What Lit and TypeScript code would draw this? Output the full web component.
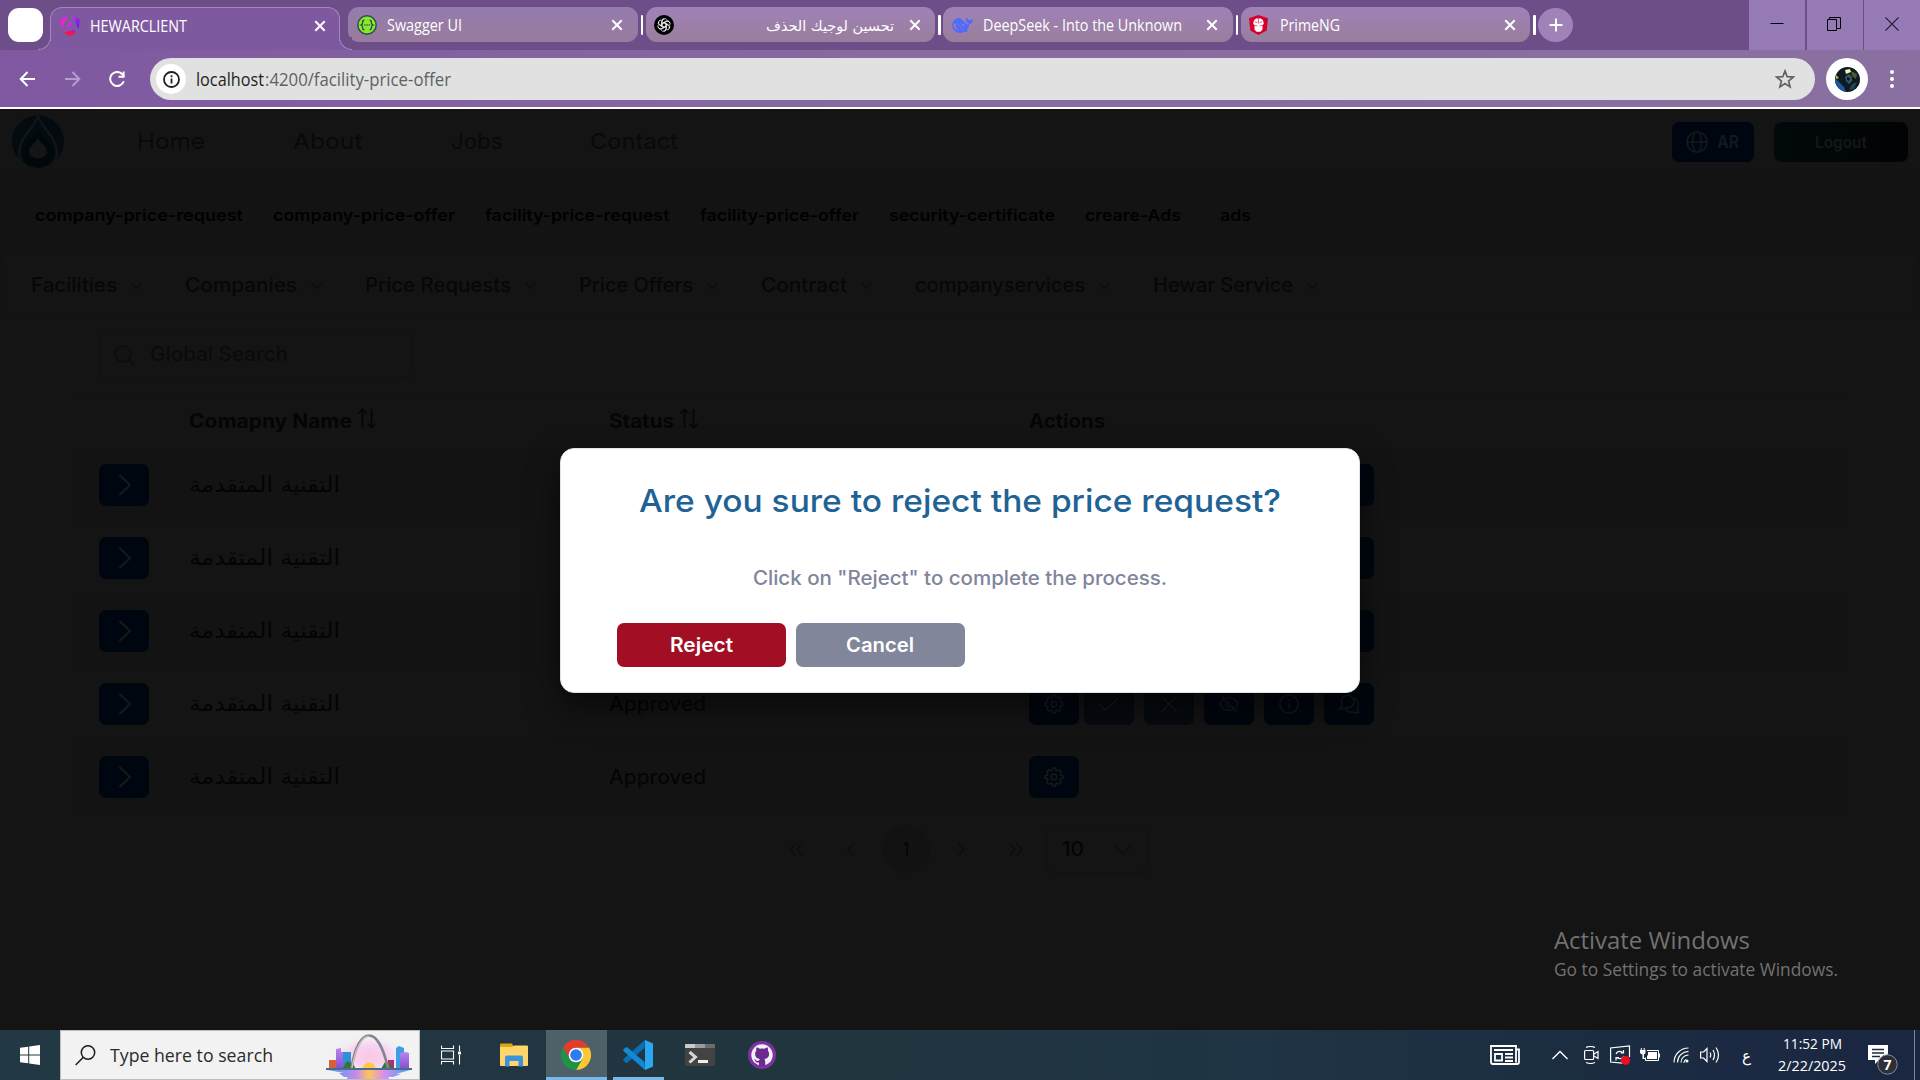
import { LitElement, html, css, svg } from "lit";
import { customElement, property } from "lit/decorators.js";

/** One line of text, stretched horizontally to an exact width. */
@customElement("fit-text")
class FitText extends LitElement {
  @property({ type: Number }) w = 0;
  static styles = css`
    :host { display: block; white-space: nowrap; line-height: 1; flex: none; }
    .t { display: inline-block; transform-origin: 0 50%; }
  `;
  render() {
    return html`<span class="t"><slot></slot></span>`;
  }
  firstUpdated() {
    const t = this.renderRoot.querySelector(".t") as HTMLElement;
    const natural = t.getBoundingClientRect().width;
    this.style.width = this.w + "px";
    if (natural) t.style.transform = `scaleX(${this.w / natural})`;
  }
}

const closeIcon = html`<svg class="close" width="12" height="12" viewBox="0 0 12 12"><path d="M1.3 1.3l9.4 9.4M10.7 1.3l-9.4 9.4" stroke="#fff" stroke-width="2" /></svg>`;

const angular = html`<svg width="20" height="20" viewBox="0 0 20 20">
  <defs><linearGradient id="ng" x1="0" y1="0" x2="1" y2=".4"><stop offset="0" stop-color="#f31bc0" /><stop offset=".55" stop-color="#d62fe0" /><stop offset="1" stop-color="#6a1bf5" /></linearGradient></defs>
  <path fill="url(#ng)" d="M12.3 0l7.3 3.2-.9 10.4zM14.4 14.3H5.6l-1 2.2h11zM7.7 0L.4 3.2l.9 10.4zM7.3 11h5.4L10 4.6z" />
  <path fill="#f5144b" d="M5.6 15.2h8.8l1 2L10 20l-5.4-2.8z" /></svg>`;

const swagger = html`<svg width="20" height="20" viewBox="0 0 20 20"><circle cx="10" cy="10" r="9.2" fill="#85ea2d" stroke="#2c4a4a" stroke-width="1.4" />
  <path d="M7.4 5.2c-1.8 0-1.8.7-1.8 2.3S5.4 9.6 4 10c1.4.4 1.600 1 1.600 2.500s0 2.300 1.800 2.300M12.600 5.200c1.800 0 1.800.7 1.800 2.300s.2 2.100 1.600 2.500c-1.400.4-1.600 1-1.600 2.500s0 2.300-1.800 2.300" fill="none" stroke="#2c4a4a" stroke-width="1.300" />
  <g fill="#2c4a4a"><circle cx="7.800" cy="10" r=".8" /><circle cx="10" cy="10" r=".8" /><circle cx="12.200" cy="10" r=".8" /></g></svg>`;

const gpt = html`<svg width="20" height="20" viewBox="0 0 20 20"><circle cx="10" cy="10" r="10" fill="#000" />
  <g fill="none" stroke="#fff" stroke-width=".8">${[0, 60, 120, 180, 240, 300].map(
    (a) => svg`<path transform="rotate(${a} 10 10)" d="M8.200 11V6.200a2.500 2.500 0 0 1 4.600-1.300M8.200 8.300l3.800-2.200a2.500 2.500 0 0 1 3.500 1" />`
  )}</g></svg>`;

const whale = html`<svg width="21" height="20" viewBox="0 0 21 20"><path fill="#4d6bfe" d="M20.800 4c-.3-.1-.5.2-.8.400-.7.700-1.500.900-2.500.700-1.200-.100-2-.8-2.400-1.900-.2-.4-.6-.700-1-.400-.5.600-.5 1.900 0 3.300.5 1.300 1.400 2 2.400 2.800-.4.700-1.400.5-2.300-.2C12.600 7.400 11 5.400 9.200 4.300c-.5-.3-.400-.600.100-.800C5 2.200.3 5 .2 10c-.1 5 4.300 8.300 8.700 7.900 1.400-.100 2.800-.6 4-1.400.5.300 2 .7 2.700.300.4-.2.200-.6-.200-.700-.6-.100-.9-.400-.900-.600 1.700-1.900 2.600-3.900 2.900-6.400 1.500-.3 2.600-1.200 3.100-2.700.3-.8.600-2.100.300-2.400zM10.900 15c-1.800-1.300-2.700-3.700-4.500-5-1.200-.9-2.500-1.100-2.800-.400-.4 2 1 4.800 3.800 5.800-3.800-.2-6-3-5.800-5.700C1.700 8.100 4.300 8 6.800 9.700c2 1.400 2.700 3.700 4.800 4.800z" /><circle cx="11.300" cy="9.800" r="1.100" fill="#a083b5" /></svg>`;

const prime = html`<svg width="19" height="20" viewBox="0 0 19 20"><path fill="#d5002c" d="M9.500 0L19 3.200l-1.300 12.300L9.500 20l-8.200-4.500L0 3.200z" />
  <path fill="#fff" d="M5 5.200l2.200-1.600h4.600L14 5.200l.8 3.600-1.300 1.700v4l-2 2.300h-4l-2-2.300v-4L4.200 8.800z" />
  <path stroke="#d5002c" stroke-width=".6" fill="none" d="M9.500 3.500v5M5.800 6.700l2.700 1M13.200 6.700l-2.700 1M5 10.300l3.500.6M14 10.300l-3.500.6" /></svg>`;

const tabs = [
  { icon: swagger, text: "Swagger UI", w: 75, gap: 10, arabic: false },
  { icon: gpt, text: "تحسين لوجيك الحذف", w: 128, gap: 92, arabic: true },
  { icon: whale, text: "DeepSeek - Into the Unknown", w: 199, gap: 10, arabic: false },
  { icon: prime, text: "PrimeNG", w: 60, gap: 11.5, arabic: false },
];

@customElement("browser-chrome")
class BrowserChrome extends LitElement {
  static styles = css`
    :host { display: block; font-family: "Open Sans", "Noto Sans", "DejaVu Sans", sans-serif; color: #fff; border-bottom: 2px solid #fff; }
    svg { display: block; flex: none; }
    .strip { height: 50px; display: flex; background: #6d4e89; box-sizing: border-box; padding-left: 8px; }
    .mini { width: 35px; height: 34px; background: #fff; border-radius: 11px; margin-top: 8px; margin-right: 7px; flex: none; position: relative; z-index: 1; }
    .active { position: relative; width: 290px; height: 43px; margin-top: 7px; box-sizing: border-box; border: 1px solid #a487bd; border-bottom: 0; border-radius: 12px 12px 0 0; background: #7f59a0; display: flex; align-items: center; padding: 0 13px 7px 9px; margin-right: 8px; }
    .active::before, .active::after { content: ""; position: absolute; bottom: 0; width: 13px; height: 13px; box-sizing: border-box; border: 1px solid #a487bd; border-top: 0; }
    .active::before { left: -13px; border-left: 0; border-bottom-right-radius: 13px; background: #6d4e89; box-shadow: 5px 5px 0 1px #7f59a0; clip-path: inset(0); }
    .active::after { right: -13px; border-right: 0; border-bottom-left-radius: 13px; background: #6d4e89; box-shadow: -5px 5px 0 1px #7f59a0; clip-path: inset(0); }
    .tab { width: 289.500px; height: 35px; margin-top: 7px; border-radius: 11px; box-sizing: border-box; background: linear-gradient(#9f82b7, #9a7e9c); display: flex; align-items: center; padding: 0 14.500px 0 8.500px; flex: none; }
    .tab.first { background: linear-gradient(#957cae, #987b9d); }
    .sep { width: 2.500px; height: 20px; background: #fff; border-radius: 1px; margin: 15px 2.500px 0 3px; flex: none; }
    .close { margin-left: auto; }
    .label { font-size: 15.500px; display: flex; padding-top: 2px; }
    .arabic { font-family: "DejaVu Sans", sans-serif; font-size: 14px; }
    .plus { width: 35px; height: 34px; border-radius: 50%; background: #9e82b8; margin: 8px 0 0 0; display: flex; align-items: center; justify-content: center; }
    .win { margin-left: auto; display: flex; gap: 1.500px; }
    .win div { width: 56px; height: 50px; background: #957ab5; display: flex; align-items: center; justify-content: center; padding: 0 1px 2px 0; box-sizing: border-box; }
    .bar { height: 57px; display: flex; align-items: center; background: linear-gradient(90deg, #7f58a1, #876aa0 45%, #8a70a1); box-sizing: border-box; padding: 1px 0 0 19px; }
    .nav { display: flex; gap: 28px; padding-right: 24px; align-items: center; }
    .omni { width: 1665px; height: 42px; border-radius: 21px; background: #e1e1e1; display: flex; align-items: center; box-sizing: border-box; padding: 0 20px 0 6px; }
    .info { width: 30px; height: 30px; border-radius: 50%; background: #fff; display: flex; align-items: center; justify-content: center; margin-right: 10px; }
    .url { font-size: 18.500px; color: #1f1f1f; display: flex; gap: 1px; padding-top: 1px; }
    .path { color: #5f6163; }
    .star { margin-left: auto; }
    .avatar { width: 42px; height: 42px; border-radius: 50%; background: #fff; margin: 0 22px 0 11px; display: flex; align-items: center; justify-content: center; }
  `;
  render() {
    return html`
      <div class="strip">
        <div class="mini"></div>
        <div class="active">${angular}<div class="label" style="margin-left:10px"><fit-text w="97">HEWARCLIENT</fit-text></div>${closeIcon}</div>
        ${tabs.map(
          (t, i) => html`
            <div class="tab ${i === 0 ? "first" : ""}">${t.icon}
              <div class="label" style="margin-left:${t.gap}px"><fit-text class=${t.arabic ? "arabic" : ""} w=${t.w}>${t.text}</fit-text></div>
              ${closeIcon}
            </div>
            <div class="sep"></div>`
        )}
        <div class="plus"><svg width="14" height="14" viewBox="0 0 14 14"><path d="M7 .5v13M.5 7h13" stroke="#fff" stroke-width="2" /></svg></div>
        <div class="win">
          <div><svg width="14" height="14" viewBox="0 0 14 14"><path d="M.5 6.500h13" stroke="#000" /></svg></div>
          <div><svg width="14" height="14" viewBox="0 0 14 14"><path d="M.5 2.500h9v11h-9zM2.500 2.500v-2h11v11h-4" fill="none" stroke="#000" /></svg></div>
          <div><svg width="14" height="14" viewBox="0 0 14 14"><path d="M.5.5l13 13M13.500.5l-13 13" stroke="#2c1f3a" stroke-width="1.100" /></svg></div>
        </div>
      </div>
      <div class="bar">
        <div class="nav">
          <svg width="17" height="16" viewBox="0 0 17 16"><path d="M16 8H2M8.500 1L1.700 8l6.800 7" fill="none" stroke="#fff" stroke-width="2" /></svg>
          <svg width="17" height="16" viewBox="0 0 17 16"><path d="M1 8h14M8.500 1l6.800 7-6.800 7" fill="none" stroke="#b49bc9" stroke-width="2" /></svg>
          <svg width="17" height="16" viewBox="0 0 17 16"><path d="M14.800 10.200A7 7 0 1 1 13.600 3.500l1 1.500" fill="none" stroke="#fff" stroke-width="2" /><path d="M15.600.4v6.300H9.500V4.800h4.200V.4z" fill="#fff" /></svg>
        </div>
        <div class="omni">
          <div class="info"><svg width="17" height="17" viewBox="0 0 17 17"><circle cx="8.500" cy="8.500" r="7.500" fill="none" stroke="#1f1f1f" stroke-width="1.800" /><path d="M8.500 7.500v5M8.500 4.300v1.900" stroke="#1f1f1f" stroke-width="1.800" /></svg></div>
          <div class="url"><fit-text w="68">localhost</fit-text><fit-text class="path" w="186">:4200/facility-price-offer</fit-text></div>
          <svg class="star" width="20" height="20" viewBox="0 0 20 20"><path d="M10 2l2.200 5.700 6 .400-4.600 3.900 1.500 5.900L10 14.600l-5.100 3.300L6.400 12 1.800 8.100l6-.4z" fill="none" stroke="#5f6163" stroke-width="1.700" /></svg>
        </div>
        <div class="avatar"><svg width="25" height="25" viewBox="0 0 25 25"><defs><clipPath id="av"><circle cx="12.500" cy="12.500" r="12.500" /></clipPath></defs><g clip-path="url(#av)"><rect width="25" height="25" fill="#0d1a20" /><path d="M0 11l9 9 2 5H0z" fill="#2255a0" /><path d="M1 8l3 3-3 1z" fill="#c9b33a" /><path d="M10 3l5-1 1 3-5 2z" fill="#f3f0c2" /><path d="M16 4l6 3-1 5-4-3z" fill="#4a5b30" /><path d="M10 10l4-3 3 3v4l-3 3-3-3z" fill="#35596a" /><path d="M12 10l3 1-1 3-2-1z" fill="#0a1118" /><path d="M17 17l5-2-3 7-5 1z" fill="#234552" /></g></svg></div>
        <svg width="4" height="20" viewBox="0 0 4 20"><g fill="#fff"><circle cx="2" cy="3" r="2" /><circle cx="2" cy="10" r="2" /><circle cx="2" cy="17" r="2" /></g></svg>
      </div>`;
  }
}

const menu: [string, number][] = [
  ["Facilities", 86], ["Companies", 112], ["Price Requests", 146], ["Price Offers", 114],
  ["Contract", 86], ["companyservices", 170], ["Hewar Service", 140],
];
const links: [string, number][] = [
  ["company-price-request", 208], ["company-price-offer", 182], ["facility-price-request", 184.5],
  ["facility-price-offer", 159], ["security-certificate", 166], ["creare-Ads", 96], ["ads", 31],
];
const heads: [string, number][] = [["Home", 68], ["About", 69.5], ["Jobs", 51.5], ["Contact", 88]];
const rows = [
  { status: "", actions: 6 }, { status: "", actions: 6 }, { status: "", actions: 6 },
  { status: "Approved", actions: 6 }, { status: "Approved", actions: 1 },
];

const ink = "#16191c";
const cog = svg`<g stroke-linejoin="round"><path d="M8.700 1h2.600l.5 2.300 1.500.6 2-1.200 2 2-1.200 2 .6 1.500 2.300.5v2.600l-2.300.5-.6 1.500 1.200 2-2 2-2-1.200-1.500.6-.5 2.300H8.700l-.5-2.300-1.500-.6-2 1.200-2-2 1.200-2-.6-1.500L1 11.300V8.700l2.300-.5.6-1.500-1.200-2 2-2 2 1.200 1.500-.6z" /><circle cx="10" cy="10" r="2.700" /></g>`;
const actionIcons = [
  cog,
  svg`<path d="M.5 10.500l6 5.500L19.500 4" />`,
  svg`<path d="M2.500 2.500l15 15M17.500 2.500l-15 15" />`,
  svg`<path d="M4.500 5C3 6 1.500 8 .8 10c1.800 4.300 5 6.200 9.200 6.200 1.600 0 3-.3 4.200-.8M7.500 4.100C12.500 3 17 5.300 19.200 10c-.6 1.400-1.500 2.700-2.600 3.700M7.300 8.500a3.200 3.200 0 0 0 4.300 4.300M3 2.500l14.500 15" />`,
  svg`<circle cx="10" cy="10" r="9.200" /><path d="M10 9v5.500M10 5.300v1.800" />`,
  svg`<path d="M3 10.500A6.300 6.300 0 1 1 7.500 13.800L1 15zM15 4a7 7 0 0 1 3.300 9.500l1.200 5.500-5.500-1A7 7 0 0 1 6.800 15.500" />`,
];
const sortIcon = html`<svg width="20" height="21" viewBox="0 0 20 21"><path d="M5.500 20V1.500M1.500 5.500l4-4 4 4M14.500 1v18.500M10.500 15.500l4 4 4-4" fill="none" stroke="#040506" stroke-width="1.600" /></svg>`;

@customElement("offer-page")
class OfferPage extends LitElement {
  static styles = css`
    :host { display: block; position: relative; height: 921px; background: #141414; font-family: Inter, "DejaVu Sans", sans-serif; color: #090b0e; overflow: hidden; }
    svg { display: block; flex: none; }
    .head { height: 64px; box-sizing: border-box; border-bottom: 1px solid #121212; display: flex; align-items: center; padding: 2px 12px 0 12px; }
    .nav { display: flex; gap: 88px; margin-left: 73px; font-size: 22px; padding-bottom: 1px; color: #08090b; }
    .btn { height: 40px; border-radius: 7px; display: flex; align-items: center; justify-content: center; color: #14181a; font-weight: 700; }
    .lang { width: 82px; background: #00060f; margin-left: auto; gap: 9px; font-size: 17px; padding-right: 2px; padding-top: 1px; box-sizing: border-box; }
    .out { width: 134px; margin-left: 20px; background: linear-gradient(90deg, #02090b, #010304); font-size: 15.500px; font-weight: 600; padding-top: 2px; box-sizing: border-box; }
    .links { height: 81px; box-sizing: border-box; display: flex; gap: 30px; align-items: center; padding: 4px 0 0 35px; font-size: 16.500px; font-weight: 600; color: #010101; background: #131313; }
    .links fit-text:last-child { margin-left: 9px; }
    .menu { height: 62px; box-sizing: border-box; border: 1px solid #121212; border-radius: 6px; display: flex; align-items: center; gap: 43.500px; padding: 1px 0 0 30px; font-size: 19.500px; font-weight: 500; color: #050709; }
    .item { display: flex; align-items: center; gap: 13.500px; }
    .search { margin: 16px 0 0 99px; width: 313px; height: 46px; box-sizing: border-box; border: 1px solid #111112; border-radius: 7px; display: flex; align-items: center; gap: 15px; padding-left: 14px; font-size: 19.500px; font-weight: 500; color: #090b0d; }
    .table { margin: 15px 79px 0; border-top: 1px solid #121212; font-size: 19.500px; }
    .row { height: 73px; box-sizing: border-box; border-bottom: 1px solid #121212; display: grid; grid-template-columns: 110px 420px 420px 1fr; align-items: center; }
    .row.th { height: 55px; font-weight: 700; color: #040506; padding-top: 1px; }
    .row.th div { display: flex; gap: 5px; align-items: center; }
    .row.th svg { position: relative; top: -3px; }
    .row:nth-child(even) { background: #131313; }
    .sq { width: 50px; height: 42px; border-radius: 7px; background: #00060f; display: flex; align-items: center; justify-content: center; }
    .first { padding-left: 20px; }
    .name { display: flex; font-family: "DejaVu Sans", sans-serif; font-size: 22px; color: #030405; }
    .status { color: #040506; font-weight: 500; padding-top: 2px; }
    .acts { display: flex; gap: 10px; }
    .acts .sq:nth-child(2) { margin-left: -5px; }
    .acts .off { background: #060a0f; }
    .pager { height: 68px; display: flex; align-items: center; justify-content: center; padding: 1px 0 0 0; font-size: 18px; font-weight: 500; }
    .pg { width: 48px; height: 48px; border-radius: 50%; display: flex; align-items: center; justify-content: center; margin-right: 7px; }
    .pg.on { background: #121212; color: #020508; padding-top: 1px; box-sizing: border-box; }
    .size { width: 103px; height: 47px; box-sizing: border-box; border: 1px solid #111111; border-radius: 7px; display: flex; align-items: center; justify-content: space-between; padding: 2px 16px 0 15px; font-size: 19.500px; color: #030404; margin-left: -1px; }
    .overlay { position: absolute; inset: 0; display: flex; align-items: center; justify-content: center; padding-top: 2px; }
    .modal { width: 800px; height: 245px; box-sizing: border-box; background: #fff; border: 1px solid #dbe4ec; border-radius: 14px; box-shadow: 0 16px 32px rgba(0, 0, 0, 0.55); padding: 36px 56px 0; display: flex; flex-direction: column; align-items: center; }
    .title { font-size: 31.500px; font-weight: 500; color: #1f6396; }
    .sub { font-size: 19.500px; font-weight: 500; color: #80859b; margin-top: 52px; }
    .row2 { display: flex; gap: 10px; align-self: stretch; margin-top: 35px; font-size: 19.500px; font-weight: 600; color: #fff; }
    .mb { width: 169px; height: 44px; border-radius: 7px; display: flex; align-items: center; justify-content: center; background: #a20f25; padding-top: 1px; box-sizing: border-box; }
    .mb.grey { background: #81869b; padding-right: 1px; }
    .mark { position: absolute; left: 1554px; top: 819px; display: flex; flex-direction: column; gap: 8px; color: #727272; font-family: "Open Sans", "Noto Sans", sans-serif; font-size: 18.500px; }
    .mark .big { font-size: 24px; }
  `;
  btn(icon: unknown, off = false) {
    return html`<div class="sq ${off ? "off" : ""}"><svg width="20" height="20" viewBox="0 0 20 20" fill="none" stroke=${ink} stroke-width="1.500">${icon}</svg></div>`;
  }
  row(status: string, count: number) {
    return html`<div class="row">
      <div class="first"><div class="sq"><svg width="14" height="22" viewBox="0 0 14 22"><path d="M3 1.500L13 11 3 20.500" fill="none" stroke="#16181a" stroke-width="2.200" stroke-linecap="round" stroke-linejoin="round" /></svg></div></div>
      <div class="name"><fit-text w="151">التقنية المتقدمة</fit-text></div>
      <div class="status">${status ? html`<fit-text w="97">${status}</fit-text>` : ""}</div>
      <div class="acts">${actionIcons.slice(0, count).map((ic, i) => this.btn(ic, i === 1 || i === 2))}</div>
    </div>`;
  }
  arrow(d: string) {
    return html`<div class="pg"><svg width="16" height="13" viewBox="0 0 16 13"><path d=${d} fill="none" stroke="#0c0d0f" stroke-width="1.400" /></svg></div>`;
  }
  render() {
    return html`
      <div class="head">
        <svg width="52" height="53" viewBox="0 0 52 53"><circle cx="26" cy="26.500" r="26" fill="#040b10" />
          <path d="M26 1C22 14 7 22 7 38c0 6 4 11 8 14M26 1c4 13 19 21 19 37 0 6-4 11-8 14" fill="none" stroke="#131516" stroke-width="2.400" />
          <path d="M26 14c-4 9-15 14-15 24a15 15 0 0 0 30 0c0-10-11-15-15-24z" fill="#01080c" />
          <path d="M26 23c-2 5-9 8-9 14a9 6.500 0 0 0 18 0c0-6-7-9-9-14z" fill="#141516" />
        </svg>
        <div class="nav">${heads.map(([t, w]) => html`<fit-text w=${w}>${t}</fit-text>`)}</div>
        <div class="btn lang"><svg width="22" height="22" viewBox="0 0 22 22" fill="none" stroke="#14181a" stroke-width="1.600"><circle cx="11" cy="11" r="10" /><ellipse cx="11" cy="11" rx="4.500" ry="10" /><path d="M1 11h20" /></svg><fit-text w="22">AR</fit-text></div>
        <div class="btn out"><fit-text w="52">Logout</fit-text></div>
      </div>
      <div class="links">${links.map(([t, w]) => html`<fit-text w=${w}>${t}</fit-text>`)}</div>
      <div class="menu">${menu.map(([t, w]) => html`<div class="item"><fit-text w=${w}>${t}</fit-text><svg width="11" height="8" viewBox="0 0 11 8"><path d="M.8 1l4.700 5.500L10.200 1" fill="none" stroke="#0b0d0f" stroke-width="1.400" /></svg></div>`)}</div>
      <div class="search"><svg width="21" height="21" viewBox="0 0 21 21"><path d="M14.500 14.500L20 20" stroke="#0b0d0f" stroke-width="1.700" /><circle cx="9" cy="9" r="8" fill="none" stroke="#0b0d0f" stroke-width="1.600" /></svg><fit-text w="138">Global Search</fit-text></div>
      <div class="table">
        <div class="row th"><div></div><div><fit-text w="163">Comapny Name</fit-text>${sortIcon}</div><div><fit-text w="65">Status</fit-text>${sortIcon}</div><div><fit-text w="76">Actions</fit-text></div></div>
        ${rows.map((r) => this.row(r.status, r.actions))}
      </div>
      <div class="pager">
        ${this.arrow("M7.500.5l-5.500 6 5.500 6M14.500.5l-5.500 6 5.500 6")}${this.arrow("M10.500.5l-5.500 6 5.500 6")}
        <div class="pg on"><fit-text w="6">1</fit-text></div>
        ${this.arrow("M5.500.5l5.500 6-5.500 6")}${this.arrow("M1.500.5l5.500 6-5.500 6M8.500.5l5.500 6-5.500 6")}
        <div class="size"><fit-text w="22">10</fit-text><svg width="18" height="10" viewBox="0 0 18 10"><path d="M1 1l8 8 8-8" fill="none" stroke="#0c0d0f" stroke-width="1.500" /></svg></div>
      </div>
      <div class="mark"><fit-text class="big" w="196">Activate Windows</fit-text><fit-text w="284">Go to Settings to activate Windows.</fit-text></div>
      <div class="overlay"><div class="modal">
        <div class="title"><fit-text w="642">Are you sure to reject the price request?</fit-text></div>
        <div class="sub"><fit-text w="414">Click on "Reject" to complete the process.</fit-text></div>
        <div class="row2"><div class="mb"><fit-text w="63">Reject</fit-text></div><div class="mb grey"><fit-text w="68">Cancel</fit-text></div></div>
      </div></div>`;
  }
}

@customElement("task-bar")
class TaskBar extends LitElement {
  static styles = css`
    :host { display: flex; height: 50px; background: linear-gradient(90deg, #223842, #21353f 45%, #1f3444 65%, #1c2e42 80%, #1a2642); color: #fff; font-family: "Open Sans", "Noto Sans", sans-serif; }
    svg { display: block; flex: none; }
    .cell { display: flex; align-items: center; justify-content: center; box-sizing: border-box; height: 50px; flex: none; }
    .start { width: 60px; }
    .search { width: 360px; height: 50px; box-sizing: border-box; background: #f2f2f2; border: 1px solid #bdbdbd; display: flex; align-items: center; padding: 0 7px 0 14px; color: #2b2b2b; font-size: 18.500px; }
    .search fit-text { margin-left: 14px; }
    .arch { margin-left: auto; align-self: flex-end; }
    .app { width: 61px; }
    .app.files { padding-left: 5px; }
    .app.on { background: #4e6168; border-bottom: 3px solid #76b9ed; padding: 3px 1px 0 0; margin-left: 4px; }
    .app.run { width: 51px; margin: 0 5.500px 0 6px; border-bottom: 3px solid #76b9ed; padding: 3px 1px 0 0; }
    .app.git { padding-left: 1px; }
    .tray { margin-left: auto; display: flex; align-items: center; }
    .caret { margin-left: 32px; }
    .cam { margin-left: 16px; }
    .sync { margin-left: 11px; }
    .bat { margin-left: 9px; }
    .wifi { margin-left: 13px; }
    .vol { margin-left: 11px; }
    .clock { width: 68px; margin: 0 22px 0 27px; display: flex; flex-direction: column; align-items: center; gap: 8px; font-size: 14.500px; }
    .ar { font-family: "DejaVu Sans", sans-serif; font-size: 16px; margin-left: 22px; padding-top: 1px; }
    .note { margin-top: 9px; }
    .edge { width: 1px; height: 50px; background: #7d8595; margin-left: 16px; margin-right: 5px; }
  `;
  render() {
    return html`
      <div class="cell start"><svg width="20" height="20" viewBox="0 0 20 20" fill="#fff"><path d="M0 2.800l8.200-1.100v7.800H0zM9.200 1.500L20 0v9.500H9.200zM0 10.500h8.200v7.800L0 17.200zM9.200 10.500H20V20L9.200 18.500z" /></svg></div>
      <div class="search">
        <svg width="21" height="21" viewBox="0 0 21 21"><circle cx="13" cy="7.500" r="6.700" fill="none" stroke="#1b1b1b" stroke-width="1.500" /><path d="M8.300 12.300L.7 20" stroke="#1b1b1b" stroke-width="1.500" /></svg>
        <fit-text w="163">Type here to search</fit-text>
        <svg class="arch" width="86" height="47" viewBox="0 0 86 47">
          <defs>
            <radialGradient id="glow"><stop offset="0" stop-color="#fcc6e2" /><stop offset=".5" stop-color="#f6d4f2" /><stop offset="1" stop-color="#f2f2f2" stop-opacity="0" /></radialGradient>
            <linearGradient id="wat"><stop offset="0" stop-color="#3f9df5" /><stop offset=".35" stop-color="#c78be8" /><stop offset=".5" stop-color="#ffc45a" /><stop offset=".68" stop-color="#d88ff0" /><stop offset="1" stop-color="#3f9df5" /></linearGradient>
            <linearGradient id="tw" x2="0" y2="1"><stop offset="0" stop-color="#b886f0" /><stop offset="1" stop-color="#8a4fd0" /></linearGradient>
          </defs>
          <ellipse cx="43" cy="24" rx="40" ry="22" fill="url(#glow)" />
          <path d="M3 28h9v8H3z" fill="#d9603c" /><path d="M10 17l5-1v20h-5zM14 20h3v16h-3z" fill="url(#tw)" /><path d="M17 20h8v16h-8z" fill="#2f8fd8" />
          <path d="M70 16l3-2 5 2v20h-8z" fill="#3f9de6" /><path d="M74 21l6-1 3 1v15h-9z" fill="url(#tw)" /><path d="M62 28h6v8h-6z" fill="#a8326e" />
          <path d="M16 37l5-8 6 3 3 5zM55 37l4-7 5 3 4 4z" fill="#38743a" />
          <circle cx="43" cy="37" r="6.500" fill="#ffc83d" />
          <path d="M25.500 36C29 14 36 3.500 43 3.500S57 14 62 36" fill="none" stroke="#85858f" stroke-width="2.600" /><path d="M26 36C29.500 15 36.500 4 43 4" fill="none" stroke="#cfc3b8" stroke-width="1.200" />
          <path d="M2 38h82l-14 4h5l-8 3h-5l2 3H20l2-3h-4l-5-4h5z" fill="url(#wat)" />
          <path d="M0 36h86v2H0z" fill="#4a6e8a" />
        </svg>
      </div>
      <div class="cell app"><svg width="20" height="20" viewBox="0 0 20 20" fill="none" stroke="#fff"><path d="M.5.500v3h12v-3M.5 19.500v-3h12v3M.5 6h12v8H.5zM18.500.5V6M18.500 10v9.500" stroke-width="1.100" /><path d="M17 6.500h3v3h-3z" fill="#fff" stroke="none" /></svg></div>
      <div class="cell app files"><svg width="28" height="24" viewBox="0 0 28 24"><path d="M0 1.500Q0 .5 1 .5h11l1.500 3H28V22H0z" fill="#e0a50e" /><path d="M0 4h12l2-1.500h13q1 0 1 1V22q0 1-1 1H1q-1 0-1-1z" fill="#ffd667" /><path d="M5 23.500v-9q0-2 2-2h14q2 0 2 2v9h-4.500V18h-9v5.500z" fill="#3c93dd" /></svg></div>
      <div class="cell app on"><svg width="30" height="30" viewBox="0 0 30 30"><path d="M28 7.500A15 15 0 0 1 15 30l6.500-11.200L15 7.500z" fill="#fcc934" /><path d="M2 7.500l6.500 11.200L15 15V7.500h13A15 15 0 0 0 2 7.500z" fill="#e33b2e" /><path d="M2 7.500A15 15 0 0 0 15 30l6.500-11.200-6 3-7-3z" fill="#1e9447" /><circle cx="15" cy="15" r="7.300" fill="#fff" /><circle cx="15" cy="15" r="5.800" fill="#2d7bf0" /></svg></div>
      <div class="cell app run"><svg width="30" height="30" viewBox="0 0 30 30"><path d="M22 0l-.5 8L4.500 22.500q-1 .5-2 0l-1.800-1.700q-1-1 0-2z" fill="#0b6fb8" /><path d="M22 30l-.5-8L4.500 7.500q-1-.5-2 0L.7 9.200q-1 1 0 2z" fill="#1289d6" /><path d="M22 0l8 3.500v23L22 30z" fill="#2aa7f2" /></svg></div>
      <div class="cell app"><svg width="30" height="22" viewBox="0 0 30 22"><rect width="30" height="22" rx="1" fill="#434344" /><path d="M0 1q0-1 1-1h9v4H0z" fill="#ccc9cc" /><path d="M10 0h10v4H10z" fill="#9b999c" /><path d="M20 0h9q1 0 1 1v3H20z" fill="#6f6c70" /><path d="M4.500 8l6 5-6 5.500" fill="none" stroke="#d5d5d5" stroke-width="3" /><path d="M13 16h10v3H13z" fill="#eee" /></svg></div>
      <div class="cell app git"><svg width="28" height="28" viewBox="0 0 28 28"><circle cx="14" cy="14" r="14" fill="#7c33a0" /><circle cx="14" cy="14" r="10.700" fill="#f4eef7" /><path d="M11 25v-3.500c-2.500.5-3.500-.8-4-2l-1-1.200c1.500-.3 2 1.500 3.200 1.700.8.100 1.500-.1 1.900-.4.1-.8.400-1.200.8-1.600-3-.4-4.800-2-4.800-5.100 0-1.300.4-2.300 1.200-3.100-.2-1-.2-2.200.3-3.300 1.200 0 2.200.6 3.100 1.300a12 12 0 0 1 4.800 0c.9-.7 1.900-1.300 3.100-1.300.4 1.100.5 2.300.3 3.300.8.800 1.200 1.800 1.200 3.100 0 3.100-1.800 4.700-4.800 5.100.6.500.9 1.300.9 2.500V25z" fill="#6b2b8e" /></svg></div>
      <div class="tray">
        <svg width="30" height="20" viewBox="0 0 30 20" fill="none" stroke="#fff" stroke-width="1.800"><path d="M26 17.500V1H1v16q0 2 2 2h24q2 0 2-2V4.500h-3" /><path d="M4 5h19M15 9h8M15 12.500h8M15 16h8" /><path d="M5 9h7v6.500H5z" /></svg>
        <svg class="caret" width="16" height="10" viewBox="0 0 16 10"><path d="M.5 9L8 1.500 15.500 9" fill="none" stroke="#fff" stroke-width="1.400" /></svg>
        <svg class="cam" width="15" height="18" viewBox="0 0 15 18" fill="none" stroke="#fff" stroke-width="1.200"><rect x=".6" y="4.500" width="9" height="9" rx="1" /><path d="M10 8l4-2.500v7L10 10M2 1.500Q6.500-.5 11 1.500M2 16.500q4.500 2 9 0" /></svg>
        <svg class="sync" width="21" height="20" viewBox="0 0 21 20" fill="none" stroke="#fff" stroke-width="1.200"><path d="M19.500 12V1L.6 3v14l12 1.200" /><path d="M6 9q1.500-3.500 5-2.500l2.500 1.500M13.500 5v3h-3M14 11q-1.500 3.500-5 2.500L6 12.500M6 15.500v-3h3" /><circle cx="15.500" cy="15.300" r="4.600" fill="#e81123" stroke="none" /></svg>
        <svg class="bat" width="20" height="14" viewBox="0 0 20 14"><path d="M7 2.500h11.500v10h-13v-3" fill="none" stroke="#fff" /><path d="M8 4h9v7H7V8q1-.5 1-2z" fill="#fff" /><path d="M19 5.500h1v4h-1zM0 2h5.500v2.500Q5.500 6 4 6.500V10h1v1H3q-.5 0-.5-.5v-4Q0 6 0 4.500z" fill="#fff" /><path d="M1.300 0v2M4.200 0v2" stroke="#fff" /></svg>
        <svg class="wifi" width="16" height="16" viewBox="0 0 16 16" fill="none" stroke="#fff" stroke-width="1.100"><path d="M1 15.500A14.500 14.500 0 0 1 15.500 1M4.500 15.500a11 11 0 0 1 11-11M8 15.500a7.500 7.500 0 0 1 7.500-7.500" /><path d="M11.500 15.500h-.5a4 4 0 0 1 2-3" /><circle cx="14" cy="14" r="1.500" fill="#fff" stroke="none" /></svg>
        <svg class="vol" width="20" height="18" viewBox="0 0 20 18" fill="none" stroke="#fff" stroke-width="1.200"><path d="M.6 6h3L7 2.500v13L3.600 12h-3zM10 6.500q1.500 2.500 0 5M13 4q3 5 0 10M16 1.500q5 7.500 0 15" /></svg>
        <fit-text class="ar" w="9">ع</fit-text>
        <div class="clock"><fit-text w="59">11:52 PM</fit-text><fit-text w="68">2/22/2025</fit-text></div>
        <svg class="note" width="30" height="30" viewBox="0 0 30 30"><path d="M0 0h20v15h-9l-4 4v-4H0z" fill="#fff" /><path d="M4 4.500h12M4 8h12M4 11.500h8" stroke="#1d2943" stroke-width="1.300" /><circle cx="19.500" cy="19.500" r="9.700" fill="#2c2f37" stroke="#8a8d94" /><text x="19.500" y="24.500" text-anchor="middle" font-size="14" font-weight="700" fill="#fff">7</text></svg>
        <div class="edge"></div>
      </div>`;
  }
}

@customElement("app-root")
class AppRoot extends LitElement {
  static styles = css`
    :host { display: flex; flex-direction: column; width: 1920px; height: 1080px; overflow: hidden; }
  `;
  render() {
    return html`<browser-chrome></browser-chrome><offer-page></offer-page><task-bar></task-bar>`;
  }
}
